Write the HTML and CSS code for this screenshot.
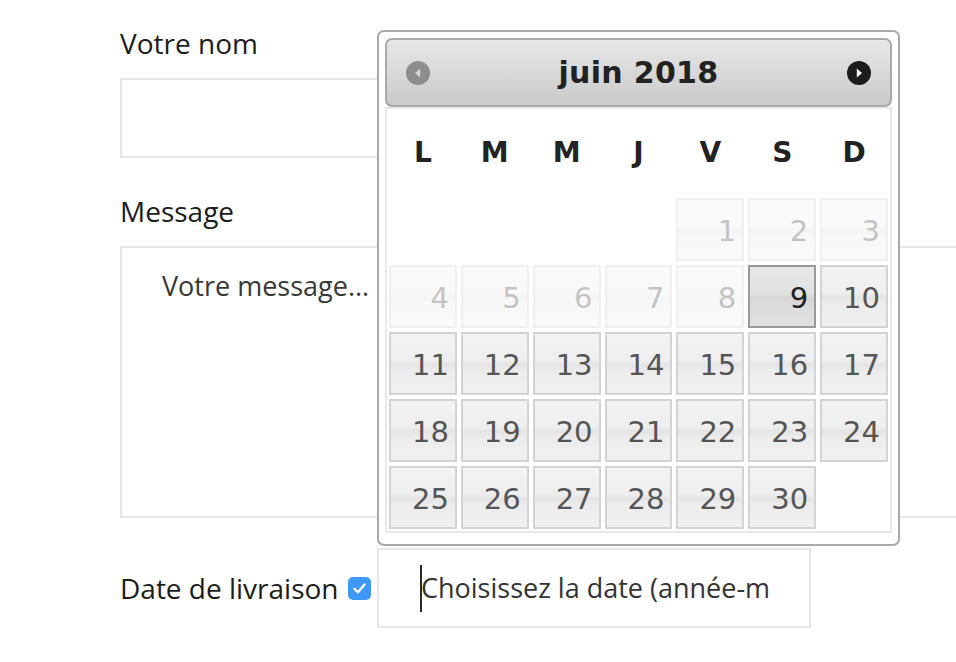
FILE: index.html
```html
<!DOCTYPE html>
<html lang="fr">
<head>
<meta charset="utf-8">
<title>Formulaire</title>
<link rel="stylesheet" href="styles.css">
</head>
<body>
<div class="page">
  <form class="form">
    <label class="label" for="nom">Votre nom</label>
    <input class="field field-name" id="nom" type="text">

    <label class="label label-msg" for="msg">Message</label>
    <textarea class="field field-msg" id="msg" placeholder="Votre message..."></textarea>

    <div class="date-row">
      <div class="date-label">
        <span class="label-inline">Date de livraison</span>
        <span class="checkbox">
          <svg viewBox="0 0 23 23" width="23" height="23"><path d="M6.5 11.8 L10 15.3 L16.5 7.5" fill="none" stroke="#fff" stroke-width="2.4" stroke-linecap="round" stroke-linejoin="round"/></svg>
        </span>
      </div>
      <div class="date-input"><span class="caret"></span><span class="date-text">Choisissez la date (année-m</span></div>
    </div>
  </form>

  <div class="datepicker">
    <div class="dp-header">
      <span class="dp-nav dp-prev">
        <svg viewBox="0 0 24 24" width="24" height="24"><circle cx="12" cy="12" r="12" fill="#8d8d8d"/><path d="M14.2 7.6 L9 12 L14.2 16.4 Z" fill="#d6d6d6"/></svg>
      </span>
      <span class="dp-title">juin 2018</span>
      <span class="dp-nav dp-next">
        <svg viewBox="0 0 24 24" width="24" height="24"><circle cx="12" cy="12" r="12" fill="#1c1c1c"/><path d="M9.8 7.6 L15 12 L9.8 16.4 Z" fill="#fff"/></svg>
      </span>
    </div>
    <div class="dp-table">
      <div class="dp-th">L</div><div class="dp-th">M</div><div class="dp-th">M</div><div class="dp-th">J</div><div class="dp-th">V</div><div class="dp-th">S</div><div class="dp-th">D</div>

      <div class="dp-empty"></div><div class="dp-empty"></div><div class="dp-empty"></div><div class="dp-empty"></div>
      <div class="dp-day off">1</div><div class="dp-day off">2</div><div class="dp-day off">3</div>

      <div class="dp-day off">4</div><div class="dp-day off">5</div><div class="dp-day off">6</div><div class="dp-day off">7</div><div class="dp-day off">8</div><div class="dp-day hover">9</div><div class="dp-day">10</div>

      <div class="dp-day">11</div><div class="dp-day">12</div><div class="dp-day">13</div><div class="dp-day">14</div><div class="dp-day">15</div><div class="dp-day">16</div><div class="dp-day">17</div>

      <div class="dp-day">18</div><div class="dp-day">19</div><div class="dp-day">20</div><div class="dp-day">21</div><div class="dp-day">22</div><div class="dp-day">23</div><div class="dp-day">24</div>

      <div class="dp-day">25</div><div class="dp-day">26</div><div class="dp-day">27</div><div class="dp-day">28</div><div class="dp-day">29</div><div class="dp-day">30</div><div class="dp-empty"></div>
    </div>
  </div>
</div>
</body>
</html>
```

FILE: styles.css
```css
html, body {
  margin: 0;
  padding: 0;
  background: #fff;
}

.page {
  position: relative;
  width: 956px;
  height: 662px;
  overflow: hidden;
  font-family: "Open Sans", "Liberation Sans", sans-serif;
}

.form {
  display: flex;
  flex-direction: column;
  align-items: flex-start;
  padding: 24px 0 0 120px;
}

.label,
.label-inline {
  display: block;
  font-size: 28px;
  line-height: 38px;
  color: #1c1c1c;
}

.label { margin-bottom: 16px; }
.label-msg { margin-top: 34px; }

.field {
  box-sizing: border-box;
  border: 2px solid #e6e6e6;
  background: #fff;
  margin: 0;
  outline: none;
  font-family: "Open Sans", "Liberation Sans", sans-serif;
  font-size: 27px;
  line-height: 38px;
  color: #333;
}

.field-name {
  width: 760px;
  height: 80px;
  padding: 0 40px;
}

.field-msg {
  width: 900px;
  height: 272px;
  padding: 19px 40px;
  resize: none;
  display: block;
}

.field-msg::placeholder { color: #383838; opacity: 1; }

.date-row {
  display: grid;
  grid-template-columns: 257px 434px;
  align-items: center;
  margin-top: 30px;
}

.date-label {
  display: flex;
  align-items: center;
  gap: 9px;
}

.checkbox {
  display: block;
  flex-shrink: 0;
  width: 23px;
  height: 23px;
  border-radius: 5px;
  background: #3d98f7;
  margin-top: 1px;
}
.checkbox svg { display: block; }

.date-input {
  box-sizing: border-box;
  height: 80px;
  border: 2px solid #e6e6e6;
  padding: 0 40px 0 41px;
  display: flex;
  align-items: center;
  white-space: nowrap;
  overflow: hidden;
  font-size: 27px;
  line-height: 38px;
  color: #333;
}

.date-text { flex-shrink: 0; }

.caret {
  display: block;
  flex-shrink: 0;
  width: 2px;
  height: 47px;
  background: #2a2a2a;
  margin-right: -1px;
  margin-top: 1px;
}

/* Datepicker popup */
.datepicker {
  position: absolute;
  left: 377px;
  top: 30px;
  width: 523px;
  box-sizing: border-box;
  border: 2px solid #aaa;
  border-radius: 7px;
  background: #fff;
  padding: 6px 6px 11px;
  font-family: "DejaVu Sans", Verdana, sans-serif;
}

.dp-header {
  box-sizing: border-box;
  height: 69px;
  border: 2px solid #aaa;
  border-radius: 7px;
  background: linear-gradient(#e7e7e7, #cacaca);
  display: flex;
  align-items: center;
  justify-content: space-between;
  padding: 0 19px;
}

.dp-nav { display: block; width: 24px; height: 24px; }
.dp-nav svg { display: block; }

.dp-title {
  font-weight: bold;
  font-size: 30px;
  letter-spacing: 0.3px;
  color: #222;
  line-height: 1;
  margin-top: 1px;
}

.dp-table {
  border: 2px solid #e8e8e8;
  display: grid;
  grid-template-columns: repeat(7, 1fr);
  grid-auto-rows: 67px;
  grid-template-rows: 87px;
}

.dp-th {
  display: flex;
  align-items: center;
  justify-content: center;
  font-weight: bold;
  font-size: 28px;
  color: #222;
}

.dp-day {
  margin: 2px;
  box-sizing: border-box;
  border: 2px solid #d3d3d3;
  background: linear-gradient(#f3f3f3 0%, #eeeeee 44%, #e4e4e4 52%, #ececec 62%, #f0f0f0 100%);
  color: #555;
  font-size: 29px;
  display: flex;
  align-items: center;
  justify-content: flex-end;
  padding-right: 6px;
  padding-top: 2px;
}

.dp-day.off { opacity: 0.35; }

.dp-day.hover {
  border-color: #999;
  background: linear-gradient(#e7e7e7 0%, #e1e1e1 46%, #d6d6d6 52%, #dcdcdc 70%, #e0e0e0 100%);
  color: #212121;
}
```
